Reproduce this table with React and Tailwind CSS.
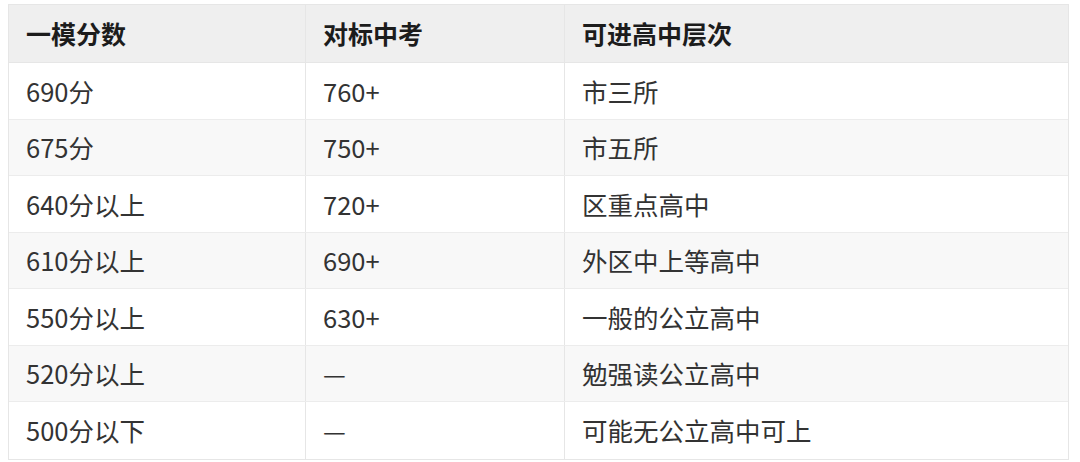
import React from 'react'

const rows = [
  ['690分', '760+', '市三所'],
  ['675分', '750+', '市五所'],
  ['640分以上', '720+', '区重点高中'],
  ['610分以上', '690+', '外区中上等高中'],
  ['550分以上', '630+', '一般的公立高中'],
  ['520分以上', '—', '勉强读公立高中'],
  ['500分以下', '—', '可能无公立高中可上'],
]

const cols = 'grid grid-cols-[297px_259px_1fr]'
const cell = 'flex items-center px-[17px] border-r border-[#e6e6e6] last:border-r-0'

export default function App() {
  return (
    <div
      className="min-h-[462px] bg-white pt-1 pl-2"
      style={{ fontFamily: '"Noto Sans CJK SC", "Noto Sans", sans-serif' }}
    >
      <div className="w-[1061px] border border-[#e6e6e6]">
        {/* Header */}
        <div className={`${cols} h-[58px] bg-[#efefef] border-b border-[#e6e6e6] text-[25px] font-bold text-[#1c1c1c]`}>
          <div className={cell}>一模分数</div>
          <div className={cell}>对标中考</div>
          <div className={cell}>可进高中层次</div>
        </div>

        {/* Body */}
        {rows.map((r, i) => (
          <div
            key={i}
            className={`${cols} h-[56.5px] text-[25.5px] text-[#333] ${i % 2 === 1 ? 'bg-[#f8f8f8]' : 'bg-white'} ${i < rows.length - 1 ? 'border-b border-[#ececec]' : ''}`}
          >
            <div className={cell}>{r[0]}</div>
            <div className={cell}>{r[1]}</div>
            <div className={cell}>{r[2]}</div>
          </div>
        ))}
      </div>
    </div>
  )
}
